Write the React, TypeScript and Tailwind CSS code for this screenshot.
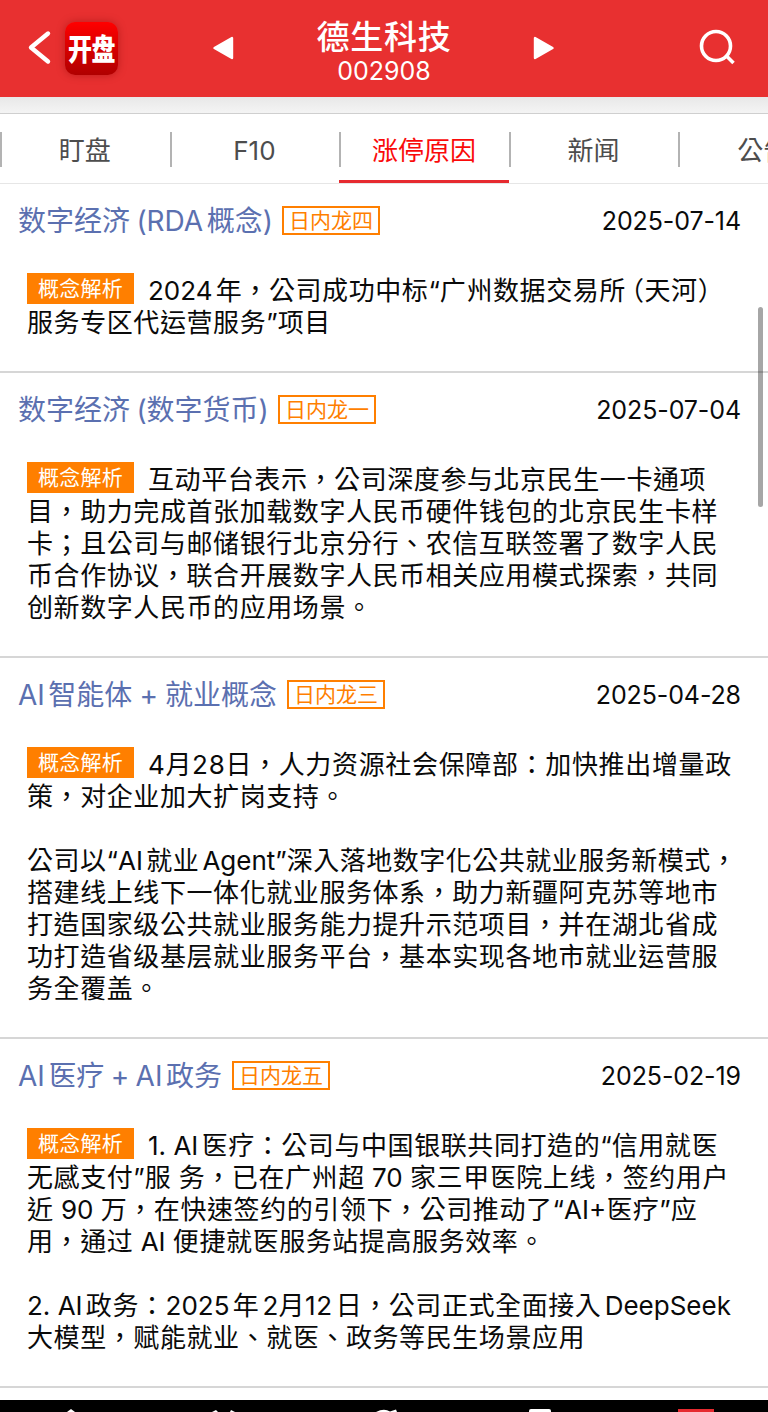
import type { ReactNode } from 'react';
import clsx from 'clsx';

interface Reason {
  title: string;
  titleClass: string;
  badge: string;
  date: string;
  lines: ReactNode[];
}

const tabs = ['盯盘', 'F10', '涨停原因', '新闻', '公告'];

const reasons: Reason[] = [
  {
    title: '数字经济 (RDA概念)',
    titleClass: 'w-[254px]',
    badge: '日内龙四',
    date: '2025-07-14',
    lines: [
      <>
        {latin('2024年，公司成功中标“广州数据交易所')}
        <span className="ml-[5px] [font-feature-settings:'halt']">（</span>天河）
      </>,
      '服务专区代运营服务”项目',
    ],
  },
  {
    title: '数字经济 (数字货币)',
    titleClass: 'w-[250px]',
    badge: '日内龙一',
    date: '2025-07-04',
    lines: [
      '互动平台表示，公司深度参与北京民生一卡通项',
      '目，助力完成首张加载数字人民币硬件钱包的北京民生卡样',
      '卡；且公司与邮储银行北京分行、农信互联签署了数字人民',
      '币合作协议，联合开展数字人民币相关应用模式探索，共同',
      '创新数字人民币的应用场景。',
    ],
  },
  {
    title: 'AI智能体 + 就业概念',
    titleClass: 'w-[259px] [word-spacing:-0.8px]!',
    badge: '日内龙三',
    date: '2025-04-28',
    lines: [
      <span className="tracking-[0.66px] [text-autospace:no-autospace]">4月28日，人力资源社会保障部：加快推出增量政</span>,
      '策，对企业加大扩岗支持。',
      '',
      <span className="tracking-[0.5px]">{latin('公司以“AI就业Agent”深入落地数字化公共就业服务新模式，')}</span>,
      '搭建线上线下一体化就业服务体系，助力新疆阿克苏等地市',
      '打造国家级公共就业服务能力提升示范项目，并在湖北省成',
      '功打造省级基层就业服务平台，基本实现各地市就业运营服',
      '务全覆盖。',
    ],
  },
  {
    title: 'AI医疗 + AI政务',
    titleClass: 'w-[204px]',
    badge: '日内龙五',
    date: '2025-02-19',
    lines: [
      '1. AI医疗：公司与中国银联共同打造的“信用就医',
      '无感支付”服 务，已在广州超 70 家三甲医院上线，签约用户',
      '近 90 万，在快速签约的引领下，公司推动了“AI+医疗”应',
      '用，通过 AI 便捷就医服务站提高服务效率。',
      '',
      <>
        {latin('2. AI政务：2025年2')}
        <span className="[text-autospace:no-autospace]">月12</span>
        <span className="ml-[3px]">{latin('日，公司正式全面接入DeepSeek')}</span>
      </>,
      '大模型，赋能就业、就医、政务等民生场景应用',
    ],
  },
];

// latin runs are set without the extra tracking of the chinese text
function latin(text: string): ReactNode {
  return text.split(/([A-Za-z0-9+.“”]+)/).map((part, i) =>
    i % 2 === 1 ? (
      <span key={i} className="tracking-normal">
        {part}
      </span>
    ) : (
      part
    )
  );
}

function Header() {
  return (
    <header className="relative flex h-[97px] items-center bg-[#e83030] pb-px text-white">
      <svg className="ml-[26px] h-9 w-7" viewBox="0 0 28 36" fill="none" stroke="currentColor" strokeWidth="4.4" strokeLinecap="round" strokeLinejoin="round">
        <path d="M22 3.5 L5 17.5 L22 31.5" />
      </svg>
      <div className="ml-[11px] flex h-[53px] w-[53px] items-center justify-center rounded-[10px] bg-linear-to-b from-[#ff0000] to-[#b00000] pt-[3px] shadow-[0_0_8px_rgba(120,0,0,0.4)]">
        <span className="scale-y-[1.22] text-[24px] leading-none font-black tracking-[-0.5px] whitespace-nowrap">开盘</span>
      </div>
      <svg className="ml-[94px] h-6 w-[22px]" viewBox="0 0 22 24" fill="currentColor" stroke="currentColor" strokeWidth="2.4" strokeLinejoin="round">
        <path d="M20 2 V22 L2.5 12 Z" />
      </svg>
      <div className="absolute inset-x-0 top-0 flex flex-col items-center">
        <h1 className="mt-[18px] text-[33px] leading-[38px] font-medium tracking-[0.8px]">德生科技</h1>
        <p className="text-[25px] leading-[30px]">002908</p>
      </div>
      <svg className="ml-[299px] h-6 w-[22px]" viewBox="0 0 22 24" fill="currentColor" stroke="currentColor" strokeWidth="2.4" strokeLinejoin="round">
        <path d="M2 2 V22 L19.5 12 Z" />
      </svg>
      <svg className="ml-[143px] h-10 w-10" viewBox="0 0 40 40" fill="none" stroke="currentColor" strokeWidth="3.6">
        <circle cx="18" cy="18" r="14.5" />
        <path d="M28.5 28 L35.5 35" />
      </svg>
    </header>
  );
}

function Tabs() {
  return (
    <nav className="flex h-[71px] overflow-hidden border-y border-t-[#cfcfcf] border-b-[#e6e6e6] bg-white">
      {tabs.map((tab) => {
        const active = tab === '涨停原因';
        return (
          <div
            key={tab}
            className={clsx(
              'relative flex w-[169.6px] shrink-0 items-center justify-center pt-[3px] text-[26px]',
              active ? 'text-[#fa0a0a]' : 'text-[#4d4d4d]'
            )}
          >
            <span className="absolute top-[18px] left-0 h-[35px] w-[2px] bg-[#b3b3b3]" />
            {tab}
            {active && <span className="absolute inset-x-0 bottom-0 h-[3px] bg-[#e62a2f]" />}
          </div>
        );
      })}
    </nav>
  );
}

function ReasonSection({ reason }: { reason: Reason }) {
  return (
    <section className="border-b-2 border-[#d6d6d6] pb-8">
      <div className="flex h-[91px] items-start pt-[19px] pr-[27px] pl-[18px]">
        <h2
          className={clsx(
            'shrink-0 text-[28px] leading-9 whitespace-nowrap text-[#5b70b0] [text-autospace:normal] [word-spacing:-1.5px]',
            reason.titleClass
          )}
        >
          {reason.title}
        </h2>
        <span className="mt-[3px] ml-[10px] flex h-[29px] w-[98px] items-center justify-center border-2 border-[#ff7f00] pb-px text-[21px] leading-none text-[#ff7f00]">
          {reason.badge}
        </span>
        <time className="ml-auto text-[25px] leading-9 tracking-[-0.1px]">{reason.date}</time>
      </div>
      <div className="pl-[27px] text-[26px] leading-8 tracking-[0.58px] whitespace-nowrap [word-spacing:-0.6px]">
        {reason.lines.map((line, i) => (
          <p key={i} className="flex h-8">
            {i === 0 && (
              <span className="-mt-0.5 mr-[14px] flex h-[31px] w-[107px] shrink-0 items-center justify-center bg-[#ff7f00] text-[21px] leading-none tracking-[0.2px] text-white">
                概念解析
              </span>
            )}
            <span className="[text-autospace:normal]">{typeof line === 'string' ? latin(line) : line}</span>
          </p>
        ))}
      </div>
    </section>
  );
}

function BottomBar() {
  return (
    <footer className="h-3 overflow-hidden bg-black text-white">
      <svg className="block h-3 w-full" viewBox="0 0 768 12">
        <path d="M67 12 L71 9 L75 12 Z" fill="#fff" />
        <path d="M212 12 L216 10 L218 12 Z M230 12 L231 10 L235 12 Z" fill="#fff" />
        <path d="M376 12 Q384 8 390 11.5 L396 9.5 L397 12 Z" fill="#fff" />
        <rect x="529" y="9" width="22" height="6" rx="2" fill="#fff" />
        <rect x="678" y="9" width="36" height="3" fill="#e62a2f" />
      </svg>
    </footer>
  );
}

export default function App() {
  return (
    <div
      lang="zh-Hant"
      className="relative flex h-[1412px] w-[768px] flex-col overflow-hidden bg-white font-['Inter','Noto_Sans_CJK_TC',sans-serif] text-[#0a0a0a]"
    >
      <Header />
      <div className="h-4 shrink-0 bg-linear-to-b from-[#e8e8e8] to-[#f4f4f4]" />
      <Tabs />
      <main className="h-[1216px] shrink-0 overflow-hidden">
        {reasons.map((reason) => (
          <ReasonSection key={reason.date} reason={reason} />
        ))}
      </main>
      <BottomBar />
      <div className="absolute top-[307px] right-[5px] h-[200px] w-[5px] rounded-full bg-black/35" />
    </div>
  );
}
